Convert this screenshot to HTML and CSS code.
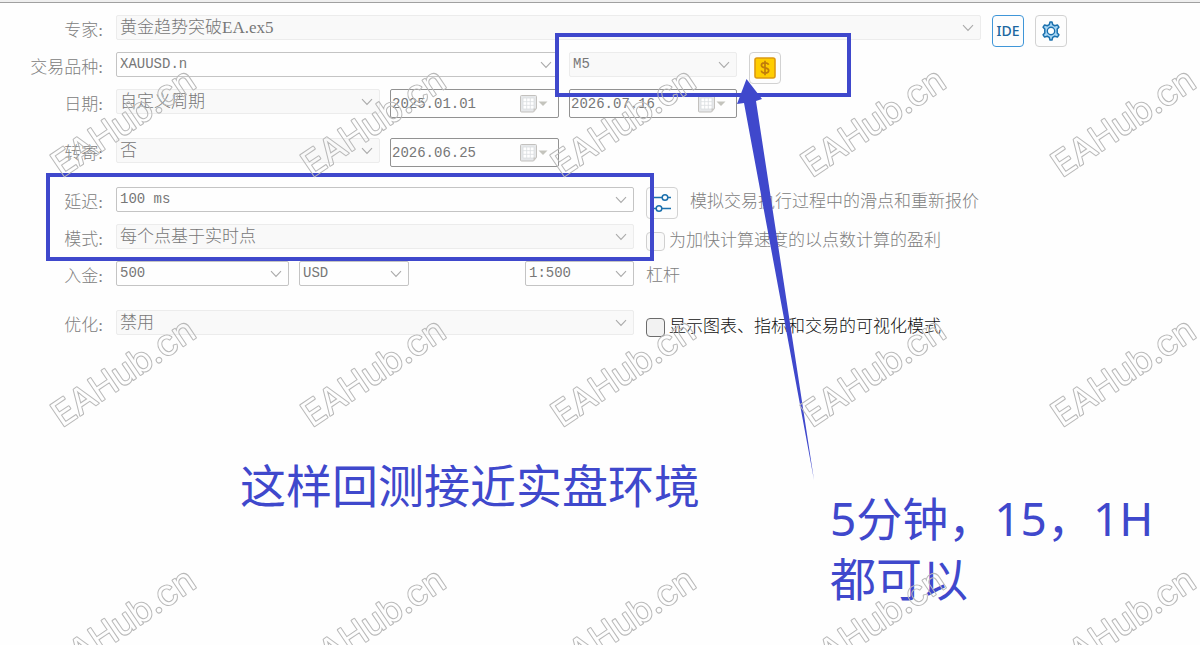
FILE: index.html
```html
<!DOCTYPE html>
<html lang="zh-CN">
<head>
<meta charset="utf-8">
<meta name="viewport" content="width=device-width, initial-scale=1">
<title>EA 回测设置</title>
<link rel="stylesheet" href="styles.css">
</head>
<body>
<svg class="symbols" aria-hidden="true">
  <symbol id="chevron" viewBox="0 0 12 8"><path d="M1 1.2 6 6.4 11 1.2" fill="none" stroke="currentColor" stroke-width="1.1"/></symbol>
  <symbol id="calendar" viewBox="0 0 28 18">
    <path d="M1.5.5h14a1 1 0 0 1 1 1v12l-3 3.500h-12a1 1 0 0 1-1-1V1.500a1 1 0 0 1 1-1z" fill="#e6e8ea" stroke="#c3c1be"/>
    <path d="M3 3h11v11H3z" fill="#fff"/>
    <path d="M3 3h11v11H3zM3 6.700h11M3 10.300h11M6.700 3v11M10.300 3v11" fill="none" stroke="#d9dde0" stroke-width=".8"/>
    <path d="M13.500 17v-3.500h3z" fill="#c9c7c3"/>
    <path d="M18.500 6.500h9L23 11z" fill="#c4c4bd"/>
  </symbol>
</svg>

<header class="topbar"></header>
<main>
  <form class="form">
    <div class="row">
      <label class="name" for="expert">专家:</label>
      <div class="fields expert-fields">
        <div class="combo off"><select id="expert" class="serif"><option>黄金趋势突破EA.ex5</option></select><svg class="chev"><use href="#chevron"/></svg></div>
        <button type="button" class="tool ide">IDE</button>
        <button type="button" class="tool" aria-label="设置">
          <svg class="icon" viewBox="0 0 20 20"><path d="M8.300 3.600 9 1h2l.7 2.600 2 1.150 2.700-.8 1.500 2.200-1.700 1.900v3.900l1.700 1.900-1.500 2.200-2.700-.8-2 1.150L11 19H9l-.7-2.600-2-1.150-2.700.8-1.500-2.200 1.700-1.900v-3.900L2.100 6.150l1.500-2.200 2.700.8z" fill="#a9d7f6" stroke="#1b70ad" stroke-width="1.500" stroke-linejoin="round"/><circle cx="10" cy="10" r="3.700" fill="#fff" stroke="#1b70ad" stroke-width="1.400"/></svg>
        </button>
      </div>
    </div>

    <div class="row">
      <label class="name" for="symbol">交易品种:</label>
      <div class="fields symbol-fields">
        <div class="combo"><select id="symbol"><option>XAUUSD.n</option></select><svg class="chev"><use href="#chevron"/></svg></div>
        <div class="anchor">
          <div class="combo off"><select aria-label="时间周期"><option>M5</option></select><svg class="chev"><use href="#chevron"/></svg></div>
          <div class="mark mark-period"></div>
          <svg class="arrow" viewBox="0 0 78 402" aria-hidden="true"><path d="M9.500 0 25 20 19 22 77 401 7 24 0 25z" fill="#3f48cc"/></svg>
        </div>
        <button type="button" class="tool" aria-label="品种规格">
          <svg class="icon coin" viewBox="0 0 22 22"><rect x="1" y="1" width="20" height="20" rx="2" fill="#ffcd00" stroke="#dc9a12" stroke-width="1.600"/><path d="M14.600 7.800C14.200 6.500 12.900 5.800 11 5.800c-2.200 0-3.600 1-3.600 2.500 0 3.600 7.300 1.700 7.300 5.200 0 1.600-1.500 2.600-3.700 2.600-2.100 0-3.500-.9-3.800-2.400M11 3.800v14.400" fill="none" stroke="#c07c0a" stroke-width="1.700"/></svg>
        </button>
      </div>
    </div>

    <div class="row tall">
      <label class="name" for="range">日期:</label>
      <div class="fields date-fields">
        <div class="combo off"><select id="range"><option>自定义周期</option></select><svg class="chev"><use href="#chevron"/></svg></div>
        <div class="date"><input type="text" value="2025.01.01" aria-label="开始日期"><button type="button" aria-label="选择开始日期"><svg><use href="#calendar"/></svg></button></div>
        <div class="date"><input type="text" value="2026.07.16" aria-label="结束日期"><button type="button" aria-label="选择结束日期"><svg><use href="#calendar"/></svg></button></div>
      </div>
    </div>

    <div class="row tall">
      <label class="name" for="forward">转寄:</label>
      <div class="fields date-fields">
        <div class="combo off"><select id="forward"><option>否</option></select><svg class="chev"><use href="#chevron"/></svg></div>
        <div class="date"><input type="text" value="2026.06.25" aria-label="转寄日期"><button type="button" aria-label="选择转寄日期"><svg><use href="#calendar"/></svg></button></div>
      </div>
    </div>

    <div class="row">
      <label class="name" for="delay">延迟:</label>
      <div class="fields split">
        <div class="anchor">
          <div class="combo"><select id="delay"><option>100 ms</option></select><svg class="chev"><use href="#chevron"/></svg></div>
          <div class="mark mark-model"></div>
        </div>
        <div class="aside">
          <button type="button" class="tool" aria-label="延迟设置">
            <svg class="icon" viewBox="0 0 20 20" fill="none" stroke="#1b70ad" stroke-width="1.500"><path d="M0 4.500h10.200M15.800 4.500H19M0 15.500h4.200M9.800 15.500H19"/><circle cx="13" cy="4.500" r="2.800"/><circle cx="7" cy="15.500" r="2.800"/></svg>
          </button>
          <span>模拟交易执行过程中的滑点和重新报价</span>
        </div>
      </div>
    </div>

    <div class="row">
      <label class="name" for="model">模式:</label>
      <div class="fields split">
        <div class="combo off"><select id="model"><option>每个点基于实时点</option></select><svg class="chev"><use href="#chevron"/></svg></div>
        <label class="check"><input type="checkbox" disabled><span>为加快计算速度的以点数计算的盈利</span></label>
      </div>
    </div>

    <div class="row tall">
      <label class="name" for="deposit">入金:</label>
      <div class="fields split">
        <div class="deposit-fields">
          <div class="combo"><select id="deposit"><option>500</option></select><svg class="chev"><use href="#chevron"/></svg></div>
          <div class="combo"><select aria-label="货币"><option>USD</option></select><svg class="chev"><use href="#chevron"/></svg></div>
          <div class="combo leverage"><select id="leverage"><option>1:500</option></select><svg class="chev"><use href="#chevron"/></svg></div>
        </div>
        <label class="unit" for="leverage">杠杆</label>
      </div>
    </div>

    <div class="row">
      <label class="name" for="optimize">优化:</label>
      <div class="fields split">
        <div class="combo off"><select id="optimize"><option>禁用</option></select><svg class="chev"><use href="#chevron"/></svg></div>
        <label class="check active"><input type="checkbox"><span>显示图表、指标和交易的可视化模式</span></label>
      </div>
    </div>
  </form>

  <section class="notes">
    <p>这样回测接近实盘环境</p>
    <p class="lower">5分钟，15，1H<br>都可以</p>
  </section>
</main>

<svg class="watermark" aria-hidden="true">
  <defs>
    <mask id="hollow" maskUnits="userSpaceOnUse" x="0" y="0" width="250" height="250">
      <rect width="250" height="250" fill="#fff"/>
      <text class="wm-cut" transform="translate(62 178) rotate(-34)">EAHub.cn</text>
    </mask>
    <pattern id="tile" width="250" height="250" patternUnits="userSpaceOnUse">
      <g mask="url(#hollow)"><text class="wm-line" transform="translate(62 178) rotate(-34)">EAHub.cn</text></g>
    </pattern>
  </defs>
  <rect width="100%" height="100%" fill="url(#tile)"/>
</svg>
</body>
</html>
```

FILE: styles.css
```css
* {
  box-sizing: border-box;
}

body {
  margin: 0;
  background: #fefefe;
  color: #808080;
  font: 300 17px/31px "Liberation Mono", "Noto Sans CJK SC", monospace;
}

.symbols {
  position: absolute;
  width: 0;
  height: 0;
}

.topbar {
  height: 3px;
  background: #efefef;
  border-bottom: 1px solid #a0a0a0;
}

.form {
  padding: 12px 133px 0 16px;
}

.row {
  display: grid;
  grid-template-columns: 88px 1fr;
  column-gap: 12px;
  height: 37px;
}

.row.tall {
  height: 49px;
}

.name {
  padding-right: 1px;
  font-family: "Liberation Serif", "Noto Sans CJK SC", serif;
  text-align: right;
  white-space: nowrap;
}

.fields {
  display: grid;
  column-gap: 10px;
  align-items: start;
}

.expert-fields {
  grid-template-columns: 1fr 32px 32px;
  column-gap: 11px;
}

.symbol-fields {
  grid-template-columns: 443fr 168fr 320fr;
}

.symbol-fields > .tool {
  margin-left: 2px;
}

.date-fields {
  grid-template-columns: minmax(0, 264fr) minmax(0, 169fr) minmax(0, 168fr) minmax(0, 320fr);
}

.split {
  grid-template-columns: 518fr 421fr;
  column-gap: 12px;
}

.deposit-fields {
  display: grid;
  grid-template-columns: 173fr 110fr 96fr 109fr;
  column-gap: 10px;
}

.leverage {
  grid-column: 4;
}

.combo {
  display: grid;
  grid-template-columns: 1fr 24px;
  align-items: center;
  min-width: 0;
}

.combo select {
  grid-area: 1 / 1 / 2 / 3;
  width: 100%;
  height: 25px;
  padding: 0 24px 0 3px;
  border: 1px solid #c4c4c4;
  border-radius: 2px;
  background: #fefefe;
  color: #777;
  font: 300 14px/23px "Liberation Mono", monospace;
  appearance: none;
}

.combo.off select {
  border-color: #ececec;
  background: #f9f9f9;
}

#range,
#forward,
#model,
#optimize,
.combo .serif {
  font: 300 17px/23px "Liberation Serif", "Noto Sans CJK SC", serif;
}

.chev {
  grid-area: 1 / 2;
  width: 12px;
  height: 8px;
  margin-left: 5px;
  color: #aaa;
  pointer-events: none;
}

.date {
  display: flex;
  align-items: center;
  height: 29px;
  padding: 0 10px 0 1px;
  border: 1px solid #929292;
  border-radius: 2px;
  background: #fefefe;
}

.date input {
  flex: 1;
  min-width: 0;
  padding: 0;
  border: 0;
  background: none;
  color: #777;
  font: 14px/24px "Liberation Mono", monospace;
}

.date button {
  display: flex;
  padding: 0;
  border: 0;
  background: none;
}

.date svg {
  width: 28px;
  height: 18px;
}

.tool {
  display: flex;
  align-items: center;
  justify-content: center;
  width: 32px;
  height: 32px;
  padding: 0;
  border: 1px solid #d2d2d2;
  border-radius: 4px;
  background: #fdfdfd;
}

.ide {
  border-color: #3f96d8;
  color: #1b66a0;
  font: 500 14px/20px "Noto Sans", sans-serif;
}

.icon {
  width: 20px;
  height: 20px;
}

.icon.coin {
  width: 22px;
  height: 22px;
}

.aside {
  display: flex;
  gap: 12px;
  white-space: nowrap;
}

.check {
  display: flex;
  align-items: center;
  gap: 4px;
  padding-top: 2px;
  white-space: nowrap;
}

.check input {
  width: 19px;
  height: 19px;
  margin: 0;
  border: 1px solid #d0d0d0;
  border-radius: 4px;
  background: #fafafa;
  appearance: none;
}

.check.active {
  color: #111;
}

.check.active input {
  border-color: #6c6c6c;
  background: #f2f2f2;
}

.anchor {
  position: relative;
}

.mark {
  position: absolute;
  border: 4px solid #3f48cc;
  pointer-events: none;
}

.mark-period {
  inset: -19px -114px auto -14px;
  height: 64px;
  z-index: 1;
}

.mark-model {
  inset: -14px -20px auto -70px;
  height: 88px;
  z-index: 1;
}

.arrow {
  position: absolute;
  top: 27px;
  left: 100%;
  width: 78px;
  height: 402px;
  z-index: 2;
  pointer-events: none;
}

.notes {
  display: grid;
  grid-template-columns: 590fr 370fr;
  padding: 108px 0 0 20%;
  color: #3f48cc;
  font: 400 46px/60px "Noto Sans", "Noto Sans CJK SC", sans-serif;
  white-space: nowrap;
}

.notes p {
  margin: 0;
}

.notes .lower {
  margin-top: 33px;
}

.watermark {
  position: fixed;
  inset: 0;
  width: 100%;
  height: 100%;
  z-index: 3;
  pointer-events: none;
}

.watermark text {
  font: 400 35px Inter, sans-serif;
  stroke-linejoin: round;
}

.wm-line {
  fill: #b8b8b8;
  stroke: #b8b8b8;
  stroke-width: 2px;
}

.wm-cut {
  fill: #000;
  stroke: #000;
  stroke-width: 0;
}
```
